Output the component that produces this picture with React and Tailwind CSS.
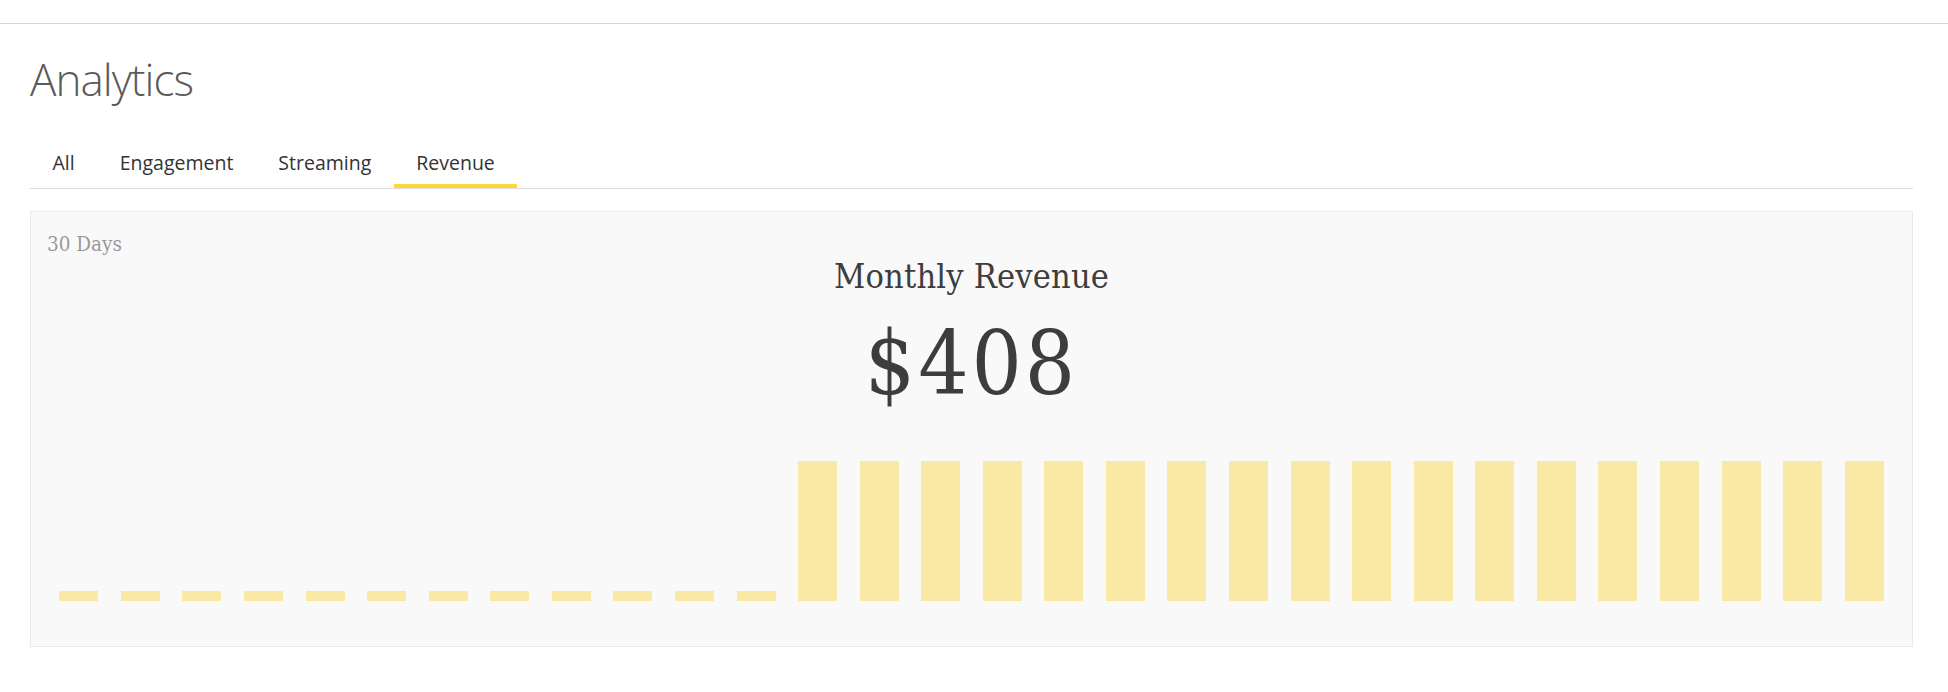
import React, { useState } from 'react';

const tabs = ['All', 'Engagement', 'Streaming', 'Revenue'];

// 30 days of revenue, first 12 days empty
const days = Array.from({ length: 30 }, (_, i) => (i < 12 ? 0 : 408));

const slab = { fontFamily: '"DejaVu Serif", "Liberation Serif", serif' };

const RevenueCard = () => (
  <div className="mt-[22px] border border-[#e9e9e9] bg-[#f9f9f9] px-4 pt-5 pb-[45px]">
    <div className="text-[20.5px] leading-6 text-[#999] font-stretch-condensed" style={slab}>30 Days</div>
    <div className="mt-[3px] text-center">
      <h2 className="text-[34px] leading-none tracking-[0.2px] text-[#3d3d3d] font-stretch-condensed" style={slab}>Monthly Revenue</h2>
      <div className="mt-[27px] text-[88px] leading-none tracking-[3px] text-[#3d3d3d] font-stretch-condensed" style={slab}>$408</div>
    </div>
    <div className="mt-[53px] grid h-[140px] grid-cols-[repeat(30,minmax(0,1fr))] items-end justify-items-center px-px">
      {days.map((v, i) => (
        <div key={i} className={`w-[39px] bg-[#fae9a4] ${v > 0 ? 'h-[140px]' : 'h-[10px]'}`} />
      ))}
    </div>
  </div>
);

const App = () => {
  const [tab, setTab] = useState('Revenue');

  return (
    <div className="min-h-[692px] bg-white" style={{ fontFamily: '"Open Sans", sans-serif' }}>
      <div className="h-6 border-b border-[#d6d6d6]" />
      <div className="pl-[30px] pr-[35px]">
        {/* Header */}
        <h1 className="mt-[32px] text-[44px] font-light leading-[46px] tracking-[-1px] text-[#5a5a5a]">Analytics</h1>

        {/* Tabs */}
        <nav className="mt-[49px] flex border-b border-[#dcdcdc]">
          {tabs.map(t => (
            <button
              key={t}
              onClick={() => setTab(t)}
              className={`border-b-4 px-[22.5px] pb-[9px] text-[19.5px] leading-6 text-[#333] ${tab === t ? 'border-[#f8da3a]' : 'border-transparent'}`}
            >
              {t}
            </button>
          ))}
        </nav>

        <RevenueCard />
      </div>
    </div>
  );
};

export default App;
